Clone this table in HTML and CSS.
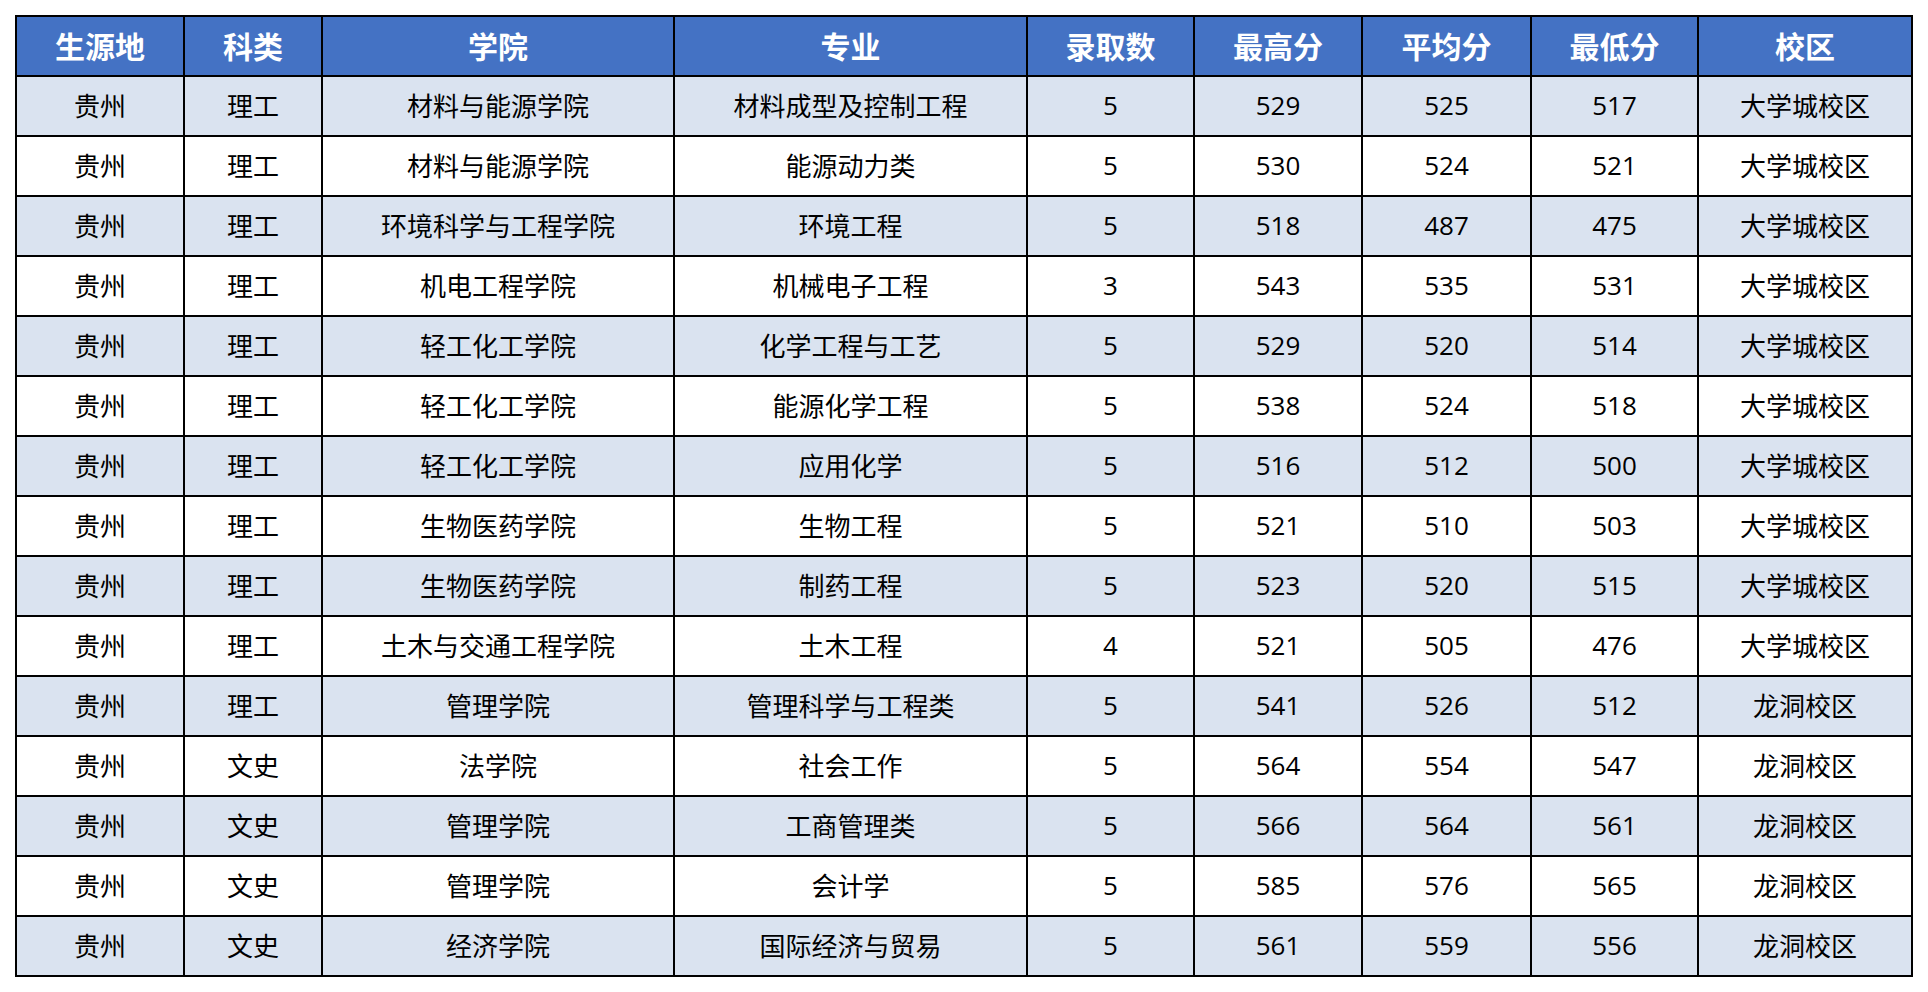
FILE: index.html
```html
<!DOCTYPE html>
<html lang="zh-CN">
<head>
<meta charset="utf-8">
<title>录取分数</title>
<link rel="stylesheet" href="styles.css">
</head>
<body>
<table class="scores">
<colgroup>
<col class="c1"><col class="c2"><col class="c3"><col class="c4"><col class="c5"><col class="c6"><col class="c7"><col class="c8"><col class="c9">
</colgroup>
<thead>
<tr><th>生源地</th><th>科类</th><th>学院</th><th>专业</th><th>录取数</th><th>最高分</th><th>平均分</th><th>最低分</th><th>校区</th></tr>
</thead>
<tbody>
<tr><td>贵州</td><td>理工</td><td>材料与能源学院</td><td>材料成型及控制工程</td><td>5</td><td>529</td><td>525</td><td>517</td><td>大学城校区</td></tr>
<tr><td>贵州</td><td>理工</td><td>材料与能源学院</td><td>能源动力类</td><td>5</td><td>530</td><td>524</td><td>521</td><td>大学城校区</td></tr>
<tr><td>贵州</td><td>理工</td><td>环境科学与工程学院</td><td>环境工程</td><td>5</td><td>518</td><td>487</td><td>475</td><td>大学城校区</td></tr>
<tr><td>贵州</td><td>理工</td><td>机电工程学院</td><td>机械电子工程</td><td>3</td><td>543</td><td>535</td><td>531</td><td>大学城校区</td></tr>
<tr><td>贵州</td><td>理工</td><td>轻工化工学院</td><td>化学工程与工艺</td><td>5</td><td>529</td><td>520</td><td>514</td><td>大学城校区</td></tr>
<tr><td>贵州</td><td>理工</td><td>轻工化工学院</td><td>能源化学工程</td><td>5</td><td>538</td><td>524</td><td>518</td><td>大学城校区</td></tr>
<tr><td>贵州</td><td>理工</td><td>轻工化工学院</td><td>应用化学</td><td>5</td><td>516</td><td>512</td><td>500</td><td>大学城校区</td></tr>
<tr><td>贵州</td><td>理工</td><td>生物医药学院</td><td>生物工程</td><td>5</td><td>521</td><td>510</td><td>503</td><td>大学城校区</td></tr>
<tr><td>贵州</td><td>理工</td><td>生物医药学院</td><td>制药工程</td><td>5</td><td>523</td><td>520</td><td>515</td><td>大学城校区</td></tr>
<tr><td>贵州</td><td>理工</td><td>土木与交通工程学院</td><td>土木工程</td><td>4</td><td>521</td><td>505</td><td>476</td><td>大学城校区</td></tr>
<tr><td>贵州</td><td>理工</td><td>管理学院</td><td>管理科学与工程类</td><td>5</td><td>541</td><td>526</td><td>512</td><td>龙洞校区</td></tr>
<tr><td>贵州</td><td>文史</td><td>法学院</td><td>社会工作</td><td>5</td><td>564</td><td>554</td><td>547</td><td>龙洞校区</td></tr>
<tr><td>贵州</td><td>文史</td><td>管理学院</td><td>工商管理类</td><td>5</td><td>566</td><td>564</td><td>561</td><td>龙洞校区</td></tr>
<tr><td>贵州</td><td>文史</td><td>管理学院</td><td>会计学</td><td>5</td><td>585</td><td>576</td><td>565</td><td>龙洞校区</td></tr>
<tr><td>贵州</td><td>文史</td><td>经济学院</td><td>国际经济与贸易</td><td>5</td><td>561</td><td>559</td><td>556</td><td>龙洞校区</td></tr>
</tbody>
</table>
</body>
</html>
```

FILE: styles.css
```css
html, body {
  margin: 0;
  padding: 0;
  background: #ffffff;
}
body {
  padding: 15px;
  font-family: "Open Sans", "Noto Sans CJK SC", sans-serif;
}
.scores {
  border-collapse: collapse;
  table-layout: fixed;
  width: 1898px;
}
.c1 { width: 168px; }
.c2 { width: 138px; }
.c3 { width: 352px; }
.c4 { width: 353px; }
.c5 { width: 167px; }
.c6 { width: 168px; }
.c7 { width: 169px; }
.c8 { width: 167px; }
.c9 { width: 214px; }
.scores th,
.scores td {
  border: 2px solid #000000;
  height: 56px;
  padding: 0 0 2px 0;
  text-align: center;
  vertical-align: middle;
  white-space: nowrap;
}
.scores th {
  background: #4472c4;
  color: #ffffff;
  font-size: 30px;
  font-weight: 700;
}
.scores td {
  color: #000000;
  font-size: 26px;
  font-weight: 400;
}
.scores tbody tr:nth-child(odd) td {
  background: #dae3f0;
}
.scores tbody tr:nth-child(even) td {
  background: #ffffff;
}
```
